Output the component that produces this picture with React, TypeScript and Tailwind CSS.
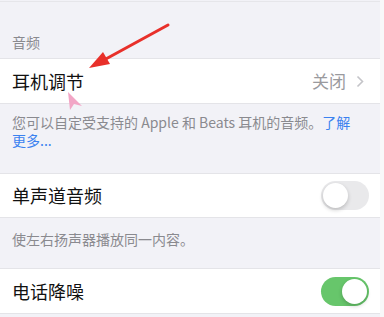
const font = { fontFamily: '"Noto Sans CJK SC", "Noto Sans", sans-serif' };

function Toggle({ on }: { on: boolean }) {
  return (
    <div
      className={
        on
          ? 'relative h-[29px] w-[48px] rounded-full bg-[#67c66b]'
          : 'relative h-[29px] w-[48px] rounded-full bg-[#e9e9eb]'
      }
    >
      <div
        className={
          on
            ? 'absolute right-[2px] top-[2px] h-[25px] w-[25px] rounded-full bg-white shadow-[0_2px_4px_rgba(0,0,0,0.2)]'
            : 'absolute left-[2px] top-[2px] h-[25px] w-[25px] rounded-full bg-white shadow-[0_2px_4px_rgba(0,0,0,0.2)]'
        }
      />
    </div>
  );
}

export default function App() {
  return (
    <div className="relative flex h-[317px] w-[384px] overflow-hidden bg-[#f2f2f7]" style={font}>
      <div className="flex w-[380px] flex-col">
        {/* section header */}
        <div className="mt-[1px] flex h-[57px] flex-col justify-between border-t border-[#e6e6ea]">
          <div />
          <div className="px-3 pb-[6px] text-[14px] leading-[20px] text-[#8a8a8f]">音频</div>
        </div>

        <div className="flex h-[46px] items-center justify-between border-y border-[#e4e4e8] bg-white pl-3 pr-[16px]">
          <span className="text-[18px] text-[#111]">耳机调节</span>
          <div className="flex items-center gap-[10px]">
            <span className="text-[17px] text-[#9a9a9e]">关闭</span>
            <svg width="8" height="13" viewBox="0 0 8 13" fill="none">
              <path d="M1.5 1.5 L6.5 6.5 L1.5 11.5" stroke="#c4c4c8" strokeWidth="1.6" />
            </svg>
          </div>
        </div>

        <div className="h-[69px] px-3 pt-[9px] text-[14px] leading-[18px] text-[#8a8a8f]">
          <div>
            您可以自定受支持的 Apple 和 Beats 耳机的音频。<span className="text-[#3b82f0]">了解</span>
          </div>
          <div className="text-[#3b82f0]">更多...</div>
        </div>

        <div className="flex h-[45px] items-center justify-between border-y border-[#e4e4e8] bg-white pl-3 pr-[11px]">
          <span className="text-[18px] text-[#111]">单声道音频</span>
          <Toggle on={false} />
        </div>

        <div className="h-[50px] px-3 pt-[11px] text-[14px] leading-[20px] text-[#8a8a8f]">
          使左右扬声器播放同一内容。
        </div>

        <div className="flex h-[46px] items-center justify-between border-y border-[#e4e4e8] bg-white pl-3 pr-[11px]">
          <span className="text-[18px] text-[#111]">电话降噪</span>
          <Toggle on={true} />
        </div>
      </div>
      <div className="w-[4px] bg-[#f8f8f9]" />

      {/* annotation arrow + cursor */}
      <svg className="pointer-events-none absolute left-0 top-0" width="384" height="317">
        <line x1="168" y1="25" x2="104" y2="60" stroke="#e8302a" strokeWidth="3" strokeLinecap="round" />
        <polygon points="89,68 103,52 110,64" fill="#e8302a" />
        <polygon points="68,92 70,110 74,104 82,106" fill="#f2a6c6" />
      </svg>
    </div>
  );
}
